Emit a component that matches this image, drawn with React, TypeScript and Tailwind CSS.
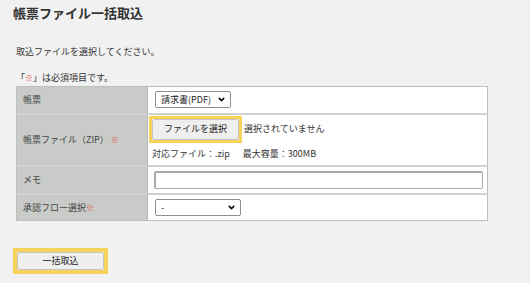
import { ChevronDown } from 'lucide-react';

const Req = () => <span className="text-[#f0463c] text-[8px]">※</span>;

function FakeSelect({ label, width }: { label: string; width: string }) {
    return (
        <div className={`${width} h-[17px] bg-white border border-[#8f8f8f] rounded-[2px] flex items-center justify-between pl-[5px] pr-[4px] text-[9px] text-[#222]`}>
            <span>{label}</span>
            <ChevronDown className="w-[9px] h-[9px] text-black" strokeWidth={4} />
        </div>
    );
}

export default function App() {
    return (
        <div className="min-h-screen bg-[#f0f1f0] text-[#333] font-['Noto_Sans_CJK_JP','Noto_Sans',sans-serif]">
            <h1 className="pl-[13px] pt-[3px] text-[13px] font-bold leading-[20px] text-[#333]">帳票ファイル一括取込</h1>

            <div className="px-[16px]">
                <p className="mt-[22px] text-[9px] leading-[14px]">取込ファイルを選択してください。</p>
                <p className="mt-[12px] text-[9px] leading-[14px]">
                    「<Req />」は必須項目です。
                </p>

                <table className="mt-[1px] w-[472px] border-collapse text-[9px] border border-[#bdbfbd]">
                    <tbody>
                        <tr className="h-[27px] border-b-2 border-[#cfd1cf]">
                            <td className="w-[132px] bg-[#c9cbc8] pl-[6px] border-r border-[#b3b5b2] text-[#444]">帳票</td>
                            <td className="bg-white pl-[7px]">
                                <FakeSelect label="請求書(PDF)" width="w-[76px]" />
                            </td>
                        </tr>
                        <tr className="h-[52px] border-b-2 border-[#cfd1cf]">
                            <td className="bg-[#c9cbc8] pl-[6px] border-r border-[#b3b5b2] text-[#444]">
                                帳票ファイル（ZIP）<span className="ml-[2px]"><Req /></span>
                            </td>
                            <td className="bg-white pl-[1px] align-top pt-[1px]">
                                <div className="flex items-center">
                                    <div className="border-[3px] border-[#f6d35a]">
                                        <button className="block w-[87px] h-[21px] bg-[#efefef] border border-[#c4c4c4] rounded-[2px] text-[9px] text-[#222]">
                                            ファイルを選択
                                        </button>
                                    </div>
                                    <span className="ml-[2px]">選択されていません</span>
                                </div>
                                <div className="mt-[4px] pl-[3px] leading-[14px]">
                                    対応ファイル：.zip<span className="ml-[13px]">最大容量：300MB</span>
                                </div>
                            </td>
                        </tr>
                        <tr className="h-[28px] border-b-2 border-[#cfd1cf]">
                            <td className="bg-[#c9cbc8] pl-[6px] border-r border-[#b3b5b2] text-[#444]">メモ</td>
                            <td className="bg-white pl-[6px] pr-[4px]">
                                <div className="w-[329px] h-[18px] bg-white border border-[#a9a9a9] border-t-2 border-l-2 rounded-[2px]" />
                            </td>
                        </tr>
                        <tr className="h-[27px]">
                            <td className="bg-[#c9cbc8] pl-[6px] border-r border-[#b3b5b2] text-[#444]">
                                承認フロー選択<Req />
                            </td>
                            <td className="bg-white pl-[7px]">
                                <FakeSelect label="-" width="w-[86px]" />
                            </td>
                        </tr>
                    </tbody>
                </table>
            </div>

            <div className="pl-[13px] mt-[24px]">
                <div className="inline-block border-[4px] border-[#f6d35a]">
                    <button className="block w-[87px] h-[18px] bg-[#efefef] border border-[#c4c4c4] rounded-[2px] text-[9px] text-[#222]">
                        一括取込
                    </button>
                </div>
            </div>
        </div>
    );
}
